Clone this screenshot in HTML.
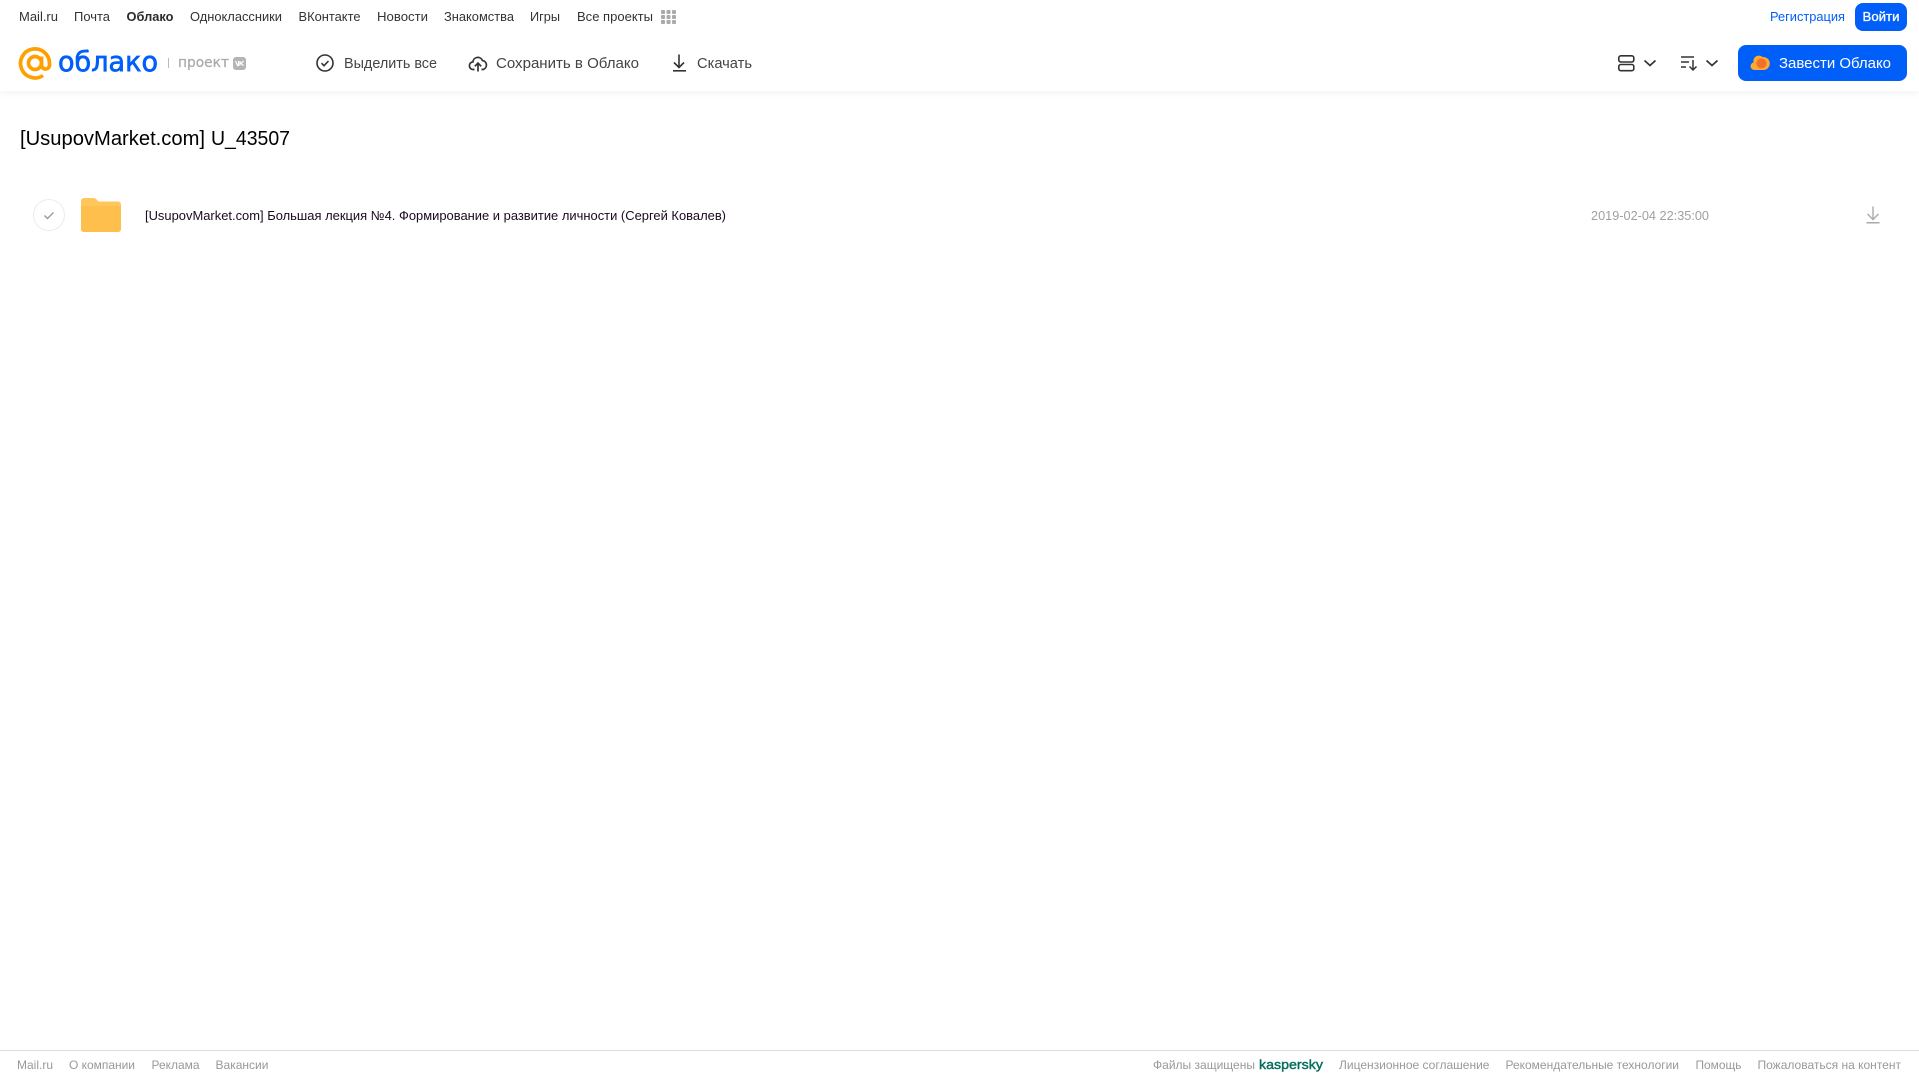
<!DOCTYPE html>
<html lang="ru"><head><meta charset="utf-8"><title>Облако</title>
<style>
html,body{margin:0;padding:0;background:#fff;width:1919px;height:1079px;overflow:hidden}
#hd{position:absolute;left:0;top:0;width:1919px;height:91px;background:#fff;box-shadow:0 1px 8px rgba(0,0,0,.07)}
svg{position:absolute;left:0;top:0}
text{font-family:"Liberation Sans",sans-serif;white-space:pre}
.n{font-size:13px;fill:#333}
.h{font-size:15px;fill:#444}
.f{font-size:12px;fill:#999}
</style></head><body>
<div id="hd"></div>
<svg width="1919" height="1079" viewBox="0 0 1919 1079">
<!-- top nav -->
<g class="n">
<text class="n" x="19" y="21" textLength="39" lengthAdjust="spacingAndGlyphs">Mail.ru</text>
<text class="n" x="74" y="21" textLength="36" lengthAdjust="spacingAndGlyphs">Почта</text>
<text class="n" x="126.500" y="21" textLength="47" lengthAdjust="spacingAndGlyphs" style="font-weight:bold;fill:#2c2c2c">Облако</text>
<text class="n" x="190" y="21" textLength="92" lengthAdjust="spacingAndGlyphs">Одноклассники</text>
<text class="n" x="298.500" y="21" textLength="62" lengthAdjust="spacingAndGlyphs">ВКонтакте</text>
<text class="n" x="377" y="21" textLength="51" lengthAdjust="spacingAndGlyphs">Новости</text>
<text class="n" x="444" y="21" textLength="70" lengthAdjust="spacingAndGlyphs">Знакомства</text>
<text class="n" x="530" y="21" textLength="30" lengthAdjust="spacingAndGlyphs">Игры</text>
<text class="n" x="577" y="21" textLength="76" lengthAdjust="spacingAndGlyphs">Все проекты</text>
</g>
<g fill="#aaa">
<rect x="661" y="10" width="4" height="4" rx="1"/><rect x="666.500" y="10" width="4" height="4" rx="1"/><rect x="672" y="10" width="4" height="4" rx="1"/>
<rect x="661" y="15" width="4" height="4" rx="1"/><rect x="666.500" y="15" width="4" height="4" rx="1"/><rect x="672" y="15" width="4" height="4" rx="1"/>
<rect x="661" y="20" width="4" height="4" rx="1"/><rect x="666.500" y="20" width="4" height="4" rx="1"/><rect x="672" y="20" width="4" height="4" rx="1"/>
</g>
<text x="1770" y="21" textLength="75" lengthAdjust="spacingAndGlyphs" style="font-size:13px;fill:#005ff9">Регистрация</text>
<rect x="1855" y="3" width="52" height="28" rx="8" fill="#005ff9"/>
<text x="1862.500" y="21" textLength="37" lengthAdjust="spacingAndGlyphs" style="font-size:13px;fill:#fff;stroke:#fff;stroke-width:.3">Войти</text>

<!-- logo -->
<g fill="none" stroke="#ffa000" stroke-width="3.700">
<circle cx="35" cy="63" r="6.500"/>
<path d="M41.500 56.500V65a4 4 0 0 0 8 0V63A14.500 14.500 0 1 0 43 75.500"/>
</g>
<text x="58" y="71" textLength="100" lengthAdjust="spacingAndGlyphs" style="font-family:'DejaVu Sans',sans-serif;font-size:28px;fill:#005ff9;stroke:#005ff9;stroke-width:.7">облако</text>
<rect x="168" y="58" width="1" height="10" fill="#bbb"/>
<text x="178" y="67" textLength="51" lengthAdjust="spacingAndGlyphs" style="font-family:'DejaVu Sans',sans-serif;font-size:14px;fill:#aaa;stroke:#aaa;stroke-width:.25">проект</text>
<rect x="233" y="57" width="13" height="13" rx="3" fill="#b4b4b4"/>
<path d="M235.500 61l2 4.500h1V61M243.500 61l-2.500 2.300 2.700 2.500M240 61v4.500" fill="none" stroke="#fff" stroke-width="1.200"/>

<!-- toolbar -->
<circle cx="325" cy="63" r="8" fill="none" stroke="#333" stroke-width="1.600"/>
<path d="M321.500 63.200l2.500 2.500 4.500-4.700" fill="none" stroke="#333" stroke-width="1.600"/>
<text class="h" x="344" y="68" textLength="93" lengthAdjust="spacingAndGlyphs">Выделить все</text>
<path d="M474.500 69.500h-1a3.800 3.800 0 0 1-.6-7.600 5 5 0 0 1 9.600-1.400 4.600 4.600 0 0 1 .5 9h-1.500" fill="none" stroke="#333" stroke-width="1.700"/>
<path d="M478 71.500v-8M474.800 66.300l3.200-3.200 3.200 3.200" fill="none" stroke="#333" stroke-width="1.700"/>
<text class="h" x="496" y="68" textLength="143" lengthAdjust="spacingAndGlyphs">Сохранить в Облако</text>
<path d="M679 54.500v12.500M674 62.500l5 5 5-5" fill="none" stroke="#333" stroke-width="1.600"/>
<rect x="673" y="70" width="13" height="1.600" fill="#333"/>
<text class="h" x="697" y="68" textLength="55" lengthAdjust="spacingAndGlyphs">Скачать</text>

<!-- right toolbar -->
<rect x="1618.800" y="55.800" width="15" height="6.200" rx="2" fill="none" stroke="#333" stroke-width="1.600"/>
<rect x="1618.800" y="64.500" width="15" height="6.200" rx="2" fill="none" stroke="#333" stroke-width="1.600"/>
<path d="M1644.500 60.500l5.500 5 5.500-5" fill="none" stroke="#333" stroke-width="1.700"/>
<path d="M1681 57h13M1681 62h8M1681 67h5" fill="none" stroke="#333" stroke-width="1.500"/>
<path d="M1693 60v10M1689.500 66.500l3.500 3.500 3.500-3.500" fill="none" stroke="#333" stroke-width="1.500"/>
<path d="M1706.500 60.500l5.500 5 5.500-5" fill="none" stroke="#333" stroke-width="1.700"/>
<rect x="1738" y="45" width="169" height="36" rx="8" fill="#005ff9"/>
<path d="M1754.500 70a3.800 3.800 0 0 1-1-7.500 5.500 5.500 0 0 1 9-5.500 6.500 6.500 0 0 1 1.500 13z" fill="#ffa930"/>
<circle cx="1761.500" cy="63.500" r="5" fill="#f4702a"/>
<text x="1779" y="68" textLength="112" lengthAdjust="spacingAndGlyphs" style="font-size:15px;fill:#fff">Завести Облако</text>

<!-- title -->
<text x="20" y="145" textLength="185" lengthAdjust="spacingAndGlyphs" style="font-size:20px;fill:#000">[UsupovMarket.com]</text>
<text x="211" y="145" textLength="79" lengthAdjust="spacingAndGlyphs" style="font-size:20px;fill:#000">U_43507</text>

<!-- row -->
<circle cx="49" cy="215" r="15.500" fill="#fff" stroke="#ececec"/>
<path d="M44.500 215.500l3 3 6-6" fill="none" stroke="#999" stroke-width="1.400"/>
<path d="M81 201a3 3 0 0 1 3-3h9c2 0 3 .8 4 2l1.500 1.500H118a3 3 0 0 1 3 3V229a3 3 0 0 1-3 3H84a3 3 0 0 1-3-3z" fill="#ffc65c"/>
<path d="M81 206h40v23a3 3 0 0 1-3 3H84a3 3 0 0 1-3-3z" fill="#ffbf4d"/>
<text x="145" y="220" textLength="581" lengthAdjust="spacingAndGlyphs" style="font-size:13px;fill:#1a0a1e">[UsupovMarket.com] Большая лекция №4. Формирование и развитие личности (Сергей Ковалев)</text>
<text x="1591" y="220" textLength="118" lengthAdjust="spacingAndGlyphs" style="font-size:13px;fill:#a0a0a0">2019-02-04 22:35:00</text>
<path d="M1873 206.500v13M1867.500 214l5.500 5.500 5.500-5.500" fill="none" stroke="#aaa" stroke-width="1.400"/>
<rect x="1866.500" y="222" width="13" height="1.500" fill="#aaa"/>

<!-- footer -->
<rect x="0" y="1050" width="1919" height="1" fill="#dcdcdc"/>
<text class="f" x="17" y="1069" textLength="36" lengthAdjust="spacingAndGlyphs">Mail.ru</text>
<text class="f" x="69" y="1069" textLength="66" lengthAdjust="spacingAndGlyphs">О компании</text>
<text class="f" x="151.500" y="1069" textLength="48" lengthAdjust="spacingAndGlyphs">Реклама</text>
<text class="f" x="215.500" y="1069" textLength="53" lengthAdjust="spacingAndGlyphs">Вакансии</text>
<text class="f" x="1153" y="1069" textLength="102" lengthAdjust="spacingAndGlyphs">Файлы защищены</text>
<text x="1259" y="1069" textLength="64" lengthAdjust="spacingAndGlyphs" style="font-size:13px;fill:#006d5c;stroke:#006d5c;stroke-width:.4">kaspersky</text>
<text class="f" x="1339" y="1069" textLength="150.500" lengthAdjust="spacingAndGlyphs">Лицензионное соглашение</text>
<text class="f" x="1505.500" y="1069" textLength="173.500" lengthAdjust="spacingAndGlyphs">Рекомендательные технологии</text>
<text class="f" x="1695.500" y="1069" textLength="46" lengthAdjust="spacingAndGlyphs">Помощь</text>
<text class="f" x="1757.500" y="1069" textLength="143.500" lengthAdjust="spacingAndGlyphs">Пожаловаться на контент</text>
</svg>
</body></html>
